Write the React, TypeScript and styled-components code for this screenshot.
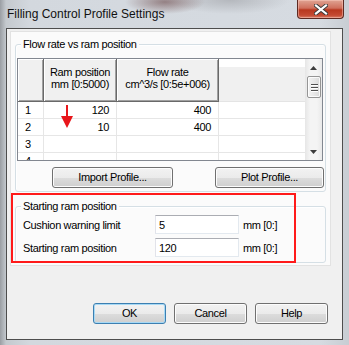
import React from "react";
import styled, { createGlobalStyle } from "styled-components";

const Global = createGlobalStyle`
  html, body { margin: 0; padding: 0; background: #cfd5dc; }
  * { box-sizing: border-box; }
`;

const ui = `font-family: "Liberation Sans", Arial, sans-serif; font-size: 11px; letter-spacing: -0.35px; color: #000;`;

const Window = styled.div`
  position: relative;
  width: 349px;
  height: 345px;
  display: flex;
  flex-direction: column;
  overflow: hidden;
  background:
    radial-gradient(ellipse 40px 12px at 165px 2px, rgba(95, 55, 55, 0.55), transparent),
    radial-gradient(ellipse 60px 14px at 230px 0px, rgba(120, 120, 125, 0.35), transparent),
    linear-gradient(to right, #9a9ea3 0px, #c4c9ce 6px, #d3d8de 30px, #d6dbe1 320px, #c8cdd3 349px);
`;

const TitleBar = styled.div`
  height: 28px;
  flex: none;
  display: flex;
  align-items: flex-start;
  justify-content: space-between;
  padding-left: 7px;
`;

const Title = styled.div`
  margin-top: 7px;
  font-family: "Liberation Sans", Arial, sans-serif;
  font-size: 12px;
  color: #111;
`;

const CloseButton = styled.div`
  width: 47px;
  height: 19px;
  margin-right: 5px;
  border: 1px solid #5d2a22;
  border-top: none;
  border-radius: 0 0 4px 4px;
  background: linear-gradient(#e0a493 0%, #cf6f5c 45%, #b8381f 55%, #c44a32 85%, #d8806a 100%);
  box-shadow: inset 0 0 0 1px rgba(255, 210, 200, 0.45);
  display: flex;
  align-items: center;
  justify-content: center;
`;

const Client = styled.div`
  position: relative;
  flex: 1;
  margin: 0 6px 5px 6px;
  border: 1px solid #4d4d4d;
  background: #f0f0f0;
  display: flex;
  flex-direction: column;
`;

const Panel = styled.div`
  margin: 2px 0 0 3px;
  width: 321px;
  height: 235px;
  border: 1px solid #e2e2e2;
  background: #fbfbfb;
  display: flex;
  flex-direction: column;
`;

const GroupBox = styled.div<{ $top: number; $height: number }>`
  position: relative;
  margin: ${(p) => p.$top}px 0 0 4px;
  width: 311px;
  height: ${(p) => p.$height}px;
  border: 1px solid #d5dfe5;
  border-radius: 3px;
  box-shadow: inset 1px 1px 0 #fff;
  display: flex;
  flex-direction: column;
`;

const Legend = styled.span`
  position: absolute;
  top: -8px;
  left: 5px;
  padding: 0 2px;
  background: #fbfbfb;
  ${ui}
  line-height: 14px;
`;

const TableBox = styled.div`
  position: relative;
  margin: 13px 0 0 1px;
  width: 306px;
  height: 103px;
  border: 1px solid #828790;
  background: #fff;
  display: flex;
  overflow: hidden;
`;

const GridArea = styled.div`
  flex: 1;
  display: flex;
  flex-direction: column;
  overflow: hidden;
`;

const GridRow = styled.div<{ $h: number }>`
  display: grid;
  grid-template-columns: 26px 73px 102px 1fr;
  height: ${(p) => p.$h}px;
  flex: none;
`;

const HeadCell = styled.div`
  ${ui}
  background: #f0f0f0;
  border-right: 1px solid #696969;
  border-bottom: 1px solid #696969;
  box-shadow: inset 1px 1px 0 #fff, inset -1px -1px 0 #a0a0a0;
  display: flex;
  flex-direction: column;
  align-items: center;
  justify-content: center;
  line-height: 12px;
  padding-bottom: 4px;
  text-align: center;
`;

const HeadFill = styled.div`
  background: linear-gradient(#ffffff 0 8px, #f0f0f0 8px);
  border-bottom: 1px solid #e4e4e4;
`;

const Cell = styled.div<{ $align?: "left" | "right" }>`
  ${ui}
  border-right: 1px solid #e6e6e6;
  border-bottom: 1px solid #e6e6e6;
  display: flex;
  align-items: center;
  justify-content: ${(p) => (p.$align === "right" ? "flex-end" : "flex-start")};
  padding: 0 7px 0 7px;
  line-height: 12px;
`;

const FillCell = styled.div`
  border-bottom: 1px solid #e6e6e6;
`;

const ScrollBar = styled.div`
  width: 17px;
  flex: none;
  background: linear-gradient(to right, #e6e6e6, #f4f4f4 30%, #f4f4f4 70%, #e9e9e9);
  display: flex;
  flex-direction: column;
  align-items: center;
`;

const ScrollArrow = styled.div`
  height: 17px;
  width: 17px;
  display: flex;
  align-items: center;
  justify-content: center;
  flex: none;
`;

const Thumb = styled.div`
  width: 14px;
  height: 22px;
  margin-left: 1px;
  border: 1px solid #959595;
  border-radius: 2px;
  background: linear-gradient(to right, #f3f3f3, #e8e8e8 50%, #d9d9d9);
  box-shadow: inset 0 0 0 1px rgba(255, 255, 255, 0.8);
  display: flex;
  flex-direction: column;
  align-items: center;
  justify-content: center;
  gap: 2px;
`;

const Grip = styled.div`
  width: 7px;
  height: 1px;
  background: #505050;
  box-shadow: 0 1px 0 #fff;
`;

const Spacer = styled.div`
  flex: 1;
`;

const ArrowMark = styled.svg`
  position: absolute;
  left: 42px;
  top: 46px;
`;

const ButtonRow = styled.div`
  display: flex;
  justify-content: space-between;
  margin-top: 6px;
  padding: 0 1px 0 36px;
`;

const Button = styled.button<{ $w: number; $default?: boolean }>`
  ${ui}
  width: ${(p) => p.$w}px;
  height: 21px;
  padding: 0 0 1px 0;
  border: 1px solid ${(p) => (p.$default ? "#3c7fb1" : "#707070")};
  border-radius: 3px;
  background: linear-gradient(#f2f2f2 0%, #ebebeb 50%, #dddddd 51%, #cfcfcf 100%);
  box-shadow: inset 0 0 0 1px ${(p) => (p.$default ? "#a7d9f5" : "#fcfcfc")};
  line-height: 18px;
  text-align: center;
  cursor: default;
`;

const FieldRow = styled.div<{ $top: number }>`
  display: flex;
  align-items: center;
  margin-top: ${(p) => p.$top}px;
  padding-left: 7px;
  height: 19px;
`;

const FieldLabel = styled.span`
  ${ui}
  width: 132px;
`;

const TextBox = styled.div`
  ${ui}
  width: 84px;
  height: 19px;
  border: 1px solid #e3e9ef;
  border-top-color: #abadb3;
  border-left-color: #e2e3ea;
  background: #fff;
  padding-left: 3px;
  display: flex;
  align-items: center;
`;

const Unit = styled.span`
  ${ui}
  margin-left: 4px;
`;

const DialogButtons = styled.div`
  margin-top: auto;
  margin-bottom: 15px;
  display: flex;
  justify-content: flex-end;
  gap: 8px;
  padding-right: 14px;
`;

const Highlight = styled.div`
  position: absolute;
  left: 4px;
  top: 164px;
  width: 285px;
  height: 70px;
  border: 2px solid #ff1a1a;
  pointer-events: none;
`;

const rows = [
  { n: "1", a: "120", b: "400" },
  { n: "2", a: "10", b: "400" },
  { n: "3", a: "", b: "" },
  { n: "4", a: "", b: "" },
];

export default function App() {
  return (
    <>
      <Global />
      <Window>
        <TitleBar>
          <Title>Filling Control Profile Settings</Title>
          <CloseButton>
            <svg width="14" height="11" viewBox="0 0 14 11">
              <path d="M2 1.5 L12 9.5 M12 1.5 L2 9.5" stroke="#3a3a3a" strokeWidth="4" strokeLinecap="square" />
              <path d="M2 1.5 L12 9.5 M12 1.5 L2 9.5" stroke="#ffffff" strokeWidth="2.2" strokeLinecap="square" />
            </svg>
          </CloseButton>
        </TitleBar>
        <Client>
          <Panel>
            <GroupBox $top={12} $height={148}>
              <Legend>Flow rate vs ram position</Legend>
              <TableBox>
                <GridArea>
                  <GridRow $h={43}>
                    <HeadCell />
                    <HeadCell>
                      <span>Ram position</span>
                      <span>mm [0:5000)</span>
                    </HeadCell>
                    <HeadCell>
                      <span>Flow rate</span>
                      <span>cm^3/s [0:5e+006)</span>
                    </HeadCell>
                    <HeadFill />
                  </GridRow>
                  {rows.map((r) => (
                    <GridRow $h={17} key={r.n}>
                      <Cell>{r.n}</Cell>
                      <Cell $align="right">{r.a}</Cell>
                      <Cell $align="right">{r.b}</Cell>
                      <FillCell />
                    </GridRow>
                  ))}
                </GridArea>
                <ScrollBar>
                  <ScrollArrow>
                    <svg width="7" height="4" viewBox="0 0 7 4">
                      <path d="M3.5 0 L7 4 L0 4 Z" fill="#3c3c3c" />
                    </svg>
                  </ScrollArrow>
                  <Thumb>
                    <Grip />
                    <Grip />
                    <Grip />
                  </Thumb>
                  <Spacer />
                  <ScrollArrow>
                    <svg width="7" height="4" viewBox="0 0 7 4">
                      <path d="M0 0 L7 0 L3.5 4 Z" fill="#3c3c3c" />
                    </svg>
                  </ScrollArrow>
                </ScrollBar>
                <ArrowMark width="14" height="24" viewBox="0 0 14 24">
                  <path d="M6 0 H8 V11 H13 L7 23 L1 11 H6 Z" fill="#e8161b" />
                </ArrowMark>
              </TableBox>
              <ButtonRow>
                <Button $w={121}>Import Profile...</Button>
                <Button $w={109}>Plot Profile...</Button>
              </ButtonRow>
            </GroupBox>
            <GroupBox $top={14} $height={57}>
              <Legend>Starting ram position</Legend>
              <FieldRow $top={8}>
                <FieldLabel>Cushion warning limit</FieldLabel>
                <TextBox>5</TextBox>
                <Unit>mm [0:]</Unit>
              </FieldRow>
              <FieldRow $top={4}>
                <FieldLabel>Starting ram position</FieldLabel>
                <TextBox>120</TextBox>
                <Unit>mm [0:]</Unit>
              </FieldRow>
            </GroupBox>
          </Panel>
          <DialogButtons>
            <Button $w={73} $default>
              OK
            </Button>
            <Button $w={73}>Cancel</Button>
            <Button $w={73}>Help</Button>
          </DialogButtons>
          <Highlight />
        </Client>
      </Window>
    </>
  );
}
